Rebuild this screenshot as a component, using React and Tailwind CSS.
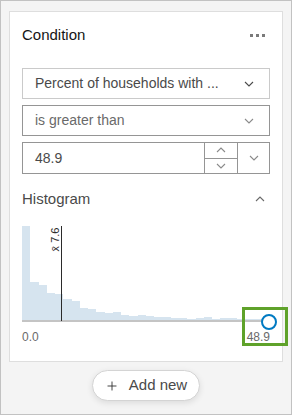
import { Plus } from "lucide-react";

const bars = [94, 38, 35, 27, 26, 21, 19, 12, 11, 8, 7, 8, 5, 4, 5, 4, 3, 3, 2.5, 2, 1, 2, 3, 1, 2, 2, 1, 1, 1, 1];

function Chevron({ up = false, className = "" }) {
  return (
    <svg width="10" height="6" viewBox="0 0 10 6" className={className}>
      <polyline
        points={up ? "1,5 5,1 9,5" : "1,1 5,5 9,1"}
        fill="none"
        stroke="currentColor"
        strokeWidth="1.1"
      />
    </svg>
  );
}

export default function App() {
  return (
    <div
      className="relative w-[292px] h-[415px] border border-[#c2c2c2] bg-[#f4f4f4] overflow-hidden"
      style={{ fontFamily: '"Liberation Sans", Arial, sans-serif' }}
    >
      {/* Card */}
      <div className="mx-[8px] mt-[10px] h-[351px] bg-white border border-[#dedede] px-[12px] pt-[12px]">
        {/* Header */}
        <div className="flex items-center justify-between h-[22px]">
          <span className="text-[15px] text-[#151515]">Condition</span>
          <span className="flex gap-[3px] mr-[5px]">
            <span className="w-[3px] h-[3px] bg-[#7a7a7a]" />
            <span className="w-[3px] h-[3px] bg-[#7a7a7a]" />
            <span className="w-[3px] h-[3px] bg-[#7a7a7a]" />
          </span>
        </div>

        {/* Inputs */}
        <div className="mt-[22px] flex flex-col gap-[6px]">
          <div className="h-[31px] border border-[#cacaca] flex items-center justify-between pl-[12px] pr-[15px]">
            <span className="text-[14px] text-[#4a4a4a]">Percent of households with ...</span>
            <Chevron className="text-[#4a4a4a]" />
          </div>
          <div className="h-[31px] border border-[#959595] flex items-center justify-between pl-[12px] pr-[15px]">
            <span className="text-[14px] text-[#6a6a6a]">is greater than</span>
            <Chevron className="text-[#8a8a8a]" />
          </div>
          <div className="h-[32px] border border-[#959595] flex">
            <div className="flex-1 flex items-center pl-[12px] text-[14px] text-[#4a4a4a]">48.9</div>
            <div className="w-[33px] border-l border-[#959595] flex flex-col">
              <div className="flex-1 flex items-center justify-center border-b border-[#959595] text-[#8a8a8a]">
                <Chevron up />
              </div>
              <div className="flex-1 flex items-center justify-center text-[#8a8a8a]">
                <Chevron />
              </div>
            </div>
            <div className="w-[32px] border-l border-[#959595] flex items-center justify-center text-[#8a8a8a]">
              <Chevron />
            </div>
          </div>
        </div>

        {/* Histogram header */}
        <div className="mt-[15px] flex items-center justify-between h-[20px]">
          <span className="text-[15px] text-[#4a4a4a]">Histogram</span>
          <Chevron up className="mr-[5px] text-[#6a6a6a]" />
        </div>

        {/* Histogram */}
        <div className="relative mt-[14px] w-[248px]">
          <div className="flex items-end h-[97px]">
            {bars.map((h, i) => (
              <div key={i} className="flex-1 bg-[#d6e4ef]" style={{ height: `${h}px` }} />
            ))}
          </div>
          <div className="h-[2px] bg-[#c4c4c4]" />
          {/* mean line */}
          <div className="absolute left-[39px] top-[3px] w-px h-[95px] bg-[#2b2b2b]" />
          <span className="absolute left-[22px] top-[10px] text-[11px] leading-[13px] text-[#2b2b2b] -rotate-90 whitespace-nowrap">
            x̄ 7.6
          </span>
          {/* handle */}
          <div className="absolute left-[239px] top-[91px] w-[16px] h-[16px] rounded-full border-2 border-[#007ac2] bg-white" />
        </div>

        <div className="mt-[6px] flex justify-between w-[248px] text-[12px] text-[#6a6a6a]">
          <span>0.0</span>
          <span>48.9</span>
        </div>
      </div>

      {/* Annotation */}
      <div className="absolute left-[241px] top-[306px] w-[46px] h-[39px] border-[3px] border-[#5fa22a]" />

      {/* Add new */}
      <div className="mt-[8px] flex justify-center">
        <button className="h-[31px] w-[108px] rounded-full bg-white border border-[#d4d4d4] shadow-[0_2px_6px_rgba(0,0,0,0.1)] flex items-center justify-center gap-[10px] text-[15px] text-[#4a4a4a]">
          <Plus size={14} strokeWidth={1.5} className="text-[#2b2b2b]" />
          <span>Add new</span>
        </button>
      </div>
    </div>
  );
}
